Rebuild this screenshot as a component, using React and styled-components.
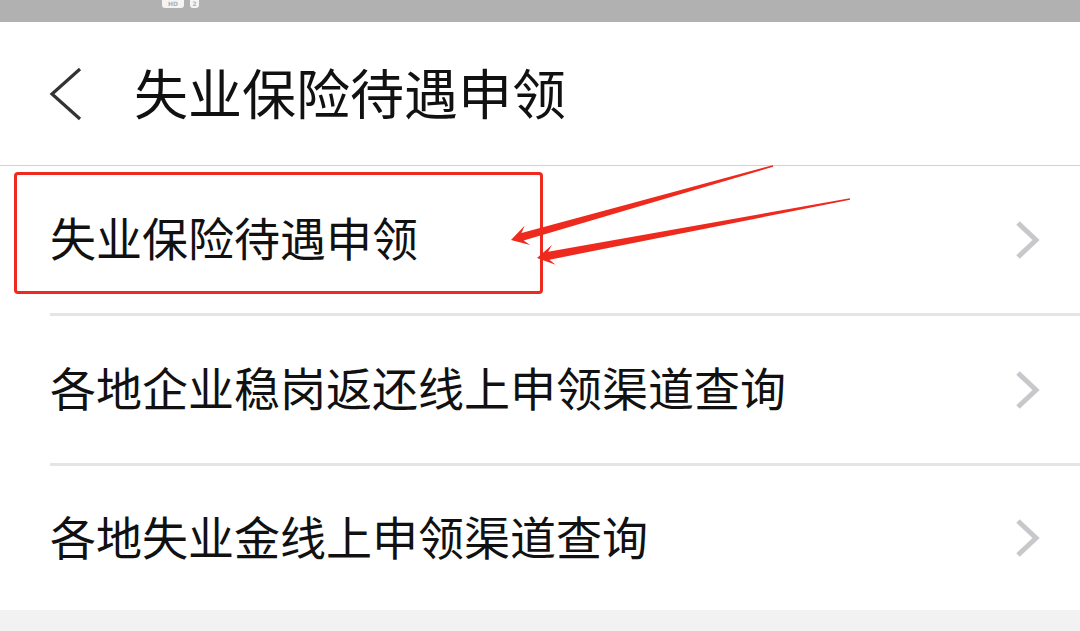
import React from 'react';
import styled, { createGlobalStyle } from 'styled-components';

const GlobalStyle = createGlobalStyle`
  html, body {
    margin: 0;
    padding: 0;
    background: #f2f2f2;
  }
  body {
    font-family: "Noto Sans CJK SC", "Noto Sans", sans-serif;
  }
`;

const Page = styled.div`
  position: relative;
  width: 1080px;
  height: 631px;
  overflow: hidden;
  background: #f2f2f2;
`;

const StatusBar = styled.div`
  height: 22px;
  background: #b1b1b1;
  display: flex;
  align-items: flex-start;
  gap: 6px;
  padding-left: 162px;
`;

const Badge = styled.div`
  width: ${(p) => p.$w}px;
  height: 8px;
  background: #f4f4f4;
  border-radius: 0 0 3px 3px;
  display: flex;
  align-items: center;
  justify-content: center;
  font: bold 6px/8px "DejaVu Sans", sans-serif;
  color: #b1b1b1;
`;

const Header = styled.div`
  height: 144px;
  box-sizing: border-box;
  padding: 0 0 4px 48px;
  background: #fff;
  border-bottom: 1px solid #d2d2d2;
  display: flex;
  align-items: center;
`;

const BackButton = styled.div`
  width: 36px;
  height: 56px;
  margin-top: 4px;
  display: flex;
  align-items: center;
`;

const Title = styled.h1`
  margin: 0 0 0 50px;
  font-size: 54px;
  font-weight: 400;
  color: #111;
  line-height: 1;
`;

const List = styled.div`
  background: #fff;
`;

const Row = styled.div`
  height: ${(p) => p.$h}px;
  box-sizing: border-box;
  display: flex;
  align-items: center;
  justify-content: space-between;
  padding: 0 40px 0 50px;
`;

const Label = styled.span`
  font-size: 46px;
  color: #111;
  line-height: 1;
  margin-bottom: 7px;
`;

const Divider = styled.div`
  height: 3px;
  margin-left: 50px;
  background: #e5e5e5;
`;

const Highlight = styled.div`
  position: absolute;
  left: 14px;
  top: 172px;
  width: 529px;
  height: 122px;
  box-sizing: border-box;
  border: 3px solid #ee2a1e;
  border-radius: 4px;
  pointer-events: none;
`;

const Overlay = styled.svg`
  position: absolute;
  left: 0;
  top: 0;
  pointer-events: none;
`;

const BackIcon = () => (
  <svg width="36" height="56" viewBox="0 0 36 56">
    <polyline points="32,3 4,28 32,53" fill="none" stroke="#333" strokeWidth="3.2" />
  </svg>
);

const Chevron = () => (
  <svg width="26" height="40" viewBox="0 0 26 40">
    <polyline points="4,3 22,20 4,37" fill="none" stroke="#c7c7cc" strokeWidth="5" />
  </svg>
);

// tapered annotation arrow: thin at the tail, fat at the head
function arrowPoints(tip, tail) {
  const dx = tail[0] - tip[0];
  const dy = tail[1] - tip[1];
  const len = Math.hypot(dx, dy);
  const u = [dx / len, dy / len];
  const n = [-u[1], u[0]];
  const at = (a, b) => [tip[0] + u[0] * a + n[0] * b, tip[1] + u[1] * a + n[1] * b];
  const pts = [
    at(0, 0),
    at(17, 10),
    at(12, 4),
    at(len, 0.8),
    at(len, -0.8),
    at(12, -4),
    at(17, -10),
  ];
  return pts.map((p) => p.map((v) => v.toFixed(1)).join(',')).join(' ');
}

const items = [
  { text: '失业保险待遇申领', h: 147 },
  { text: '各地企业稳岗返还线上申领渠道查询', h: 147 },
  { text: '各地失业金线上申领渠道查询', h: 144 },
];

export default function App() {
  return (
    <Page>
      <GlobalStyle />
      <StatusBar>
        <Badge $w={22}>HD</Badge>
        <Badge $w={9}>2</Badge>
      </StatusBar>
      <Header>
        <BackButton>
          <BackIcon />
        </BackButton>
        <Title>失业保险待遇申领</Title>
      </Header>
      <List>
        {items.map((item, i) => (
          <React.Fragment key={item.text}>
            {i > 0 && <Divider />}
            <Row $h={item.h}>
              <Label>{item.text}</Label>
              <Chevron />
            </Row>
          </React.Fragment>
        ))}
      </List>
      <Highlight />
      <Overlay width="1080" height="631">
        <polygon points={arrowPoints([511, 240], [773, 166])} fill="#ee2a1e" />
        <polygon points={arrowPoints([537, 258], [850, 199])} fill="#ee2a1e" />
      </Overlay>
    </Page>
  );
}
